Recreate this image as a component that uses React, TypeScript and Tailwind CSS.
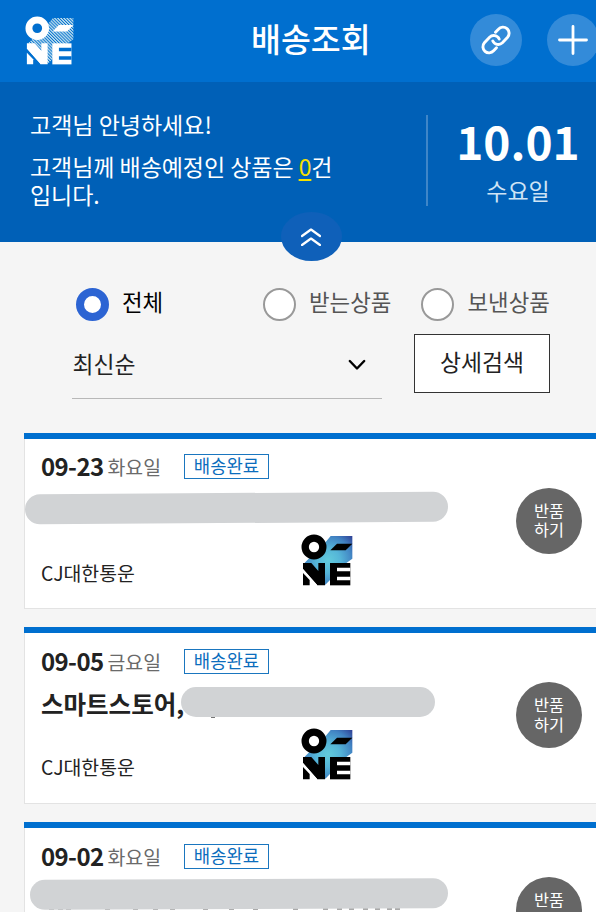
import * as React from "react";
import { useId, useState } from "react";

const filters = ["전체", "받는상품", "보낸상품"];

const deliveries = [
  {
    date: "09-23",
    day: "화요일",
    title: "",
    mask: "left-0 top-[60px] w-[423px] rotate-[-0.4deg]",
    specks: [],
  },
  {
    date: "09-05",
    day: "금요일",
    title: "스마트스토어,",
    mask: "left-[156px] top-[60px] w-[254px]",
    specks: [186],
  },
  {
    date: "09-02",
    day: "화요일",
    title: "",
    mask: "left-[5px] top-[56.5px] w-[418px] rotate-[-0.25deg]",
    specks: [24, 33, 41, 80, 108, 128, 145, 178, 204, 228, 268, 298, 312, 324, 338, 350, 362, 370],
  },
];

function OneLogo({ mono = false, className }: { mono?: boolean; className: string }) {
  const id = useId();
  const ink = mono ? "#fff" : "#000";
  return (
    <svg viewBox="0 0 154 156" className={className} aria-label="ONE">
      <defs>
        <radialGradient id={id + "g"} gradientUnits="userSpaceOnUse" cx="80" cy="80" r="105">
          <stop offset="0" stopColor="#62cbdc" />
          <stop offset="0.35" stopColor="#55b5d8" />
          <stop offset="0.7" stopColor="#4183c3" />
          <stop offset="1" stopColor="#2e3c92" />
        </radialGradient>
        <pattern id={id + "h"} width="7" height="7" patternUnits="userSpaceOnUse" patternTransform="rotate(45)">
          <rect width="7" height="4" fill="#c4e2ee" />
        </pattern>
      </defs>
      <path
        d="M88 6H153V74L134 88L86 138L72 152L10 86L22 74L60 40Z"
        fill={mono ? `url(#${id}h)` : `url(#${id}g)`}
      />
      <circle cx="38" cy="39" r="26.5" fill={mono ? "#006fcf" : "#fff"} stroke={ink} strokeWidth="22" />
      <path d="M87 49L107 29H153L133 49Z" fill={ink} />
      {/* lower row */}
      <path d="M5 87H30L51 111V87H71V154H48L5 105Z" fill={ink} />
      <path d="M5 105L48 154H25V140L5 117Z" fill={mono ? "#006fcf" : "#fff"} />
      <path d="M5 117L25 138V154H5Z" fill={ink} />
      <path d="M86 87H147V154H86Z" fill={ink} />
      <path d="M107 101H147V112H107ZM107 128H147V139H107Z" fill={mono ? "#006fcf" : "#fff"} />
    </svg>
  );
}

function LinkIcon() {
  return (
    <svg viewBox="0 0 32 32" className="size-8" fill="none" stroke="#fff" strokeWidth="2.9" strokeLinecap="round">
      <path d="M15.5 8.2L18.4 5.2A6 6 0 0 1 27.6 13.2L22.4 18.8A6 6 0 0 1 12.8 17" />
      <path d="M16.5 23.8L13.6 26.8A6 6 0 0 1 4.4 18.8L9.6 13.2A6 6 0 0 1 19.2 15" />
    </svg>
  );
}

function Header() {
  return (
    <header className="flex h-[82.3px] bg-[#006fcf]">
      <div className="w-[200px] pt-[15.5px] pl-[25px]">
        <OneLogo mono className="h-[49px] w-[49px]" />
      </div>
      <h1 className="flex-1 pt-[14px] pl-[51px] text-[32.5px] leading-[48px] font-medium whitespace-nowrap text-white">
        배송조회
      </h1>
      <div className="flex w-[126px] shrink-0 gap-[25px] pt-[14px]">
        <button className="flex size-[52px] shrink-0 items-center justify-center rounded-full bg-[#338bd9]">
          <LinkIcon />
        </button>
        <button className="flex size-[52px] shrink-0 items-center justify-center rounded-full bg-[#338bd9]">
          <svg viewBox="0 0 30 30" className="size-[30px]" stroke="#fff" strokeWidth="2.8" strokeLinecap="round">
            <path d="M15 1.5V28.5M1.5 15H28.5" />
          </svg>
        </button>
      </div>
    </header>
  );
}

function Greeting() {
  return (
    <section className="relative flex h-[160px] bg-[#0060b7] text-white">
      <div className="w-[426px] pt-[28.2px] pl-[30px] text-[23px] leading-[28px]">
        <p>고객님 안녕하세요!</p>
        <p className="mt-[13.5px] tracking-[-0.05px]">
          고객님께 배송예정인 상품은{" "}
          <span className="text-[#f5e100] underline decoration-2 underline-offset-[3px]">0</span>건
          <br />
          입니다.
        </p>
      </div>
      <div className="mt-[33px] h-[91px] w-[1.5px] bg-[#3f86c8]" />
      <div className="ml-[16px] flex w-[149px] flex-col items-center">
        <p className="mt-[31px] text-[46px] leading-[54px] font-bold">10.01</p>
        <p className="mt-[9px] text-[23px] leading-[28px] text-[#cfe4f5]">수요일</p>
      </div>
      <button className="absolute top-[130px] left-[281px] flex h-[49px] w-[61px] items-center justify-center rounded-[50%] bg-[#0f60b9]">
        <svg viewBox="0 0 20 18" className="mr-[1px] h-[18px] w-[20px]" fill="none" stroke="#fff" strokeWidth="2.2" strokeLinecap="round" strokeLinejoin="round">
          <path d="M1 8L10 1.5L19 8M1 17L10 10.5L19 17" />
        </svg>
      </button>
    </section>
  );
}

function Filters() {
  const [selected, setSelected] = useState(0);

  return (
    <section className="h-[190.4px] pt-[42px]">
      <div className="flex h-[40px] items-center pl-[75.5px] text-[22.4px] text-[#555]">
        {filters.map((name, i) => (
          <label
            key={name}
            className={
              i === 0 ? "flex w-[187px] items-center" : i === 1 ? "flex w-[158.5px] items-center" : "flex items-center"
            }
          >
            <input type="radio" name="filter" className="sr-only" checked={selected === i} onChange={() => setSelected(i)} />
            <span
              className={
                selected === i
                  ? "size-[33px] shrink-0 rounded-full border-8 border-[#2c64d3] bg-white"
                  : "size-[33px] shrink-0 rounded-full border-2 border-[#999] bg-white"
              }
            />
            <span className={selected === i ? "-mt-[5px] ml-[13.5px] text-black" : "-mt-[5px] ml-[13.5px]"}>{name}</span>
          </label>
        ))}
      </div>
      <div className="mt-[9.5px] flex pl-[72px] text-[22.8px] text-[#222]">
        <div className="flex h-[65px] w-[310px] justify-between border-b border-[#b8b8b8] pr-[16px] leading-[60px]">
          <span className="pl-[0.5px]">최신순</span>
          <svg viewBox="0 0 18 12" className="mt-[25px] h-[12px] w-[18px]" fill="none" stroke="#000" strokeWidth="2.4" strokeLinecap="round" strokeLinejoin="round">
            <path d="M1.8 2L9 9.5L16.2 2" />
          </svg>
        </div>
        <button className="ml-[32px] h-[59px] w-[136px] border border-[#333] bg-white pb-[3px]">상세검색</button>
      </div>
    </section>
  );
}

function DeliveryCard({ item }: { item: (typeof deliveries)[number] }) {
  return (
    <article className="relative h-[176.7px] border-b border-l border-[#e3e3e3] bg-white pl-[16px]">
      <div className="-mr-px -ml-[17px] h-[6px] bg-[#006fcf]" />
      <div className="flex h-[56px] items-center">
        <span className="w-[66.5px] pb-[1px] text-[24px] font-bold tracking-[-0.6px] text-[#222]">{item.date}</span>
        <span className="w-[76.5px] text-[19.4px] text-[#6a6a6a]">{item.day}</span>
        <span className="flex h-[25px] w-[85px] items-center justify-center border border-[#1a76bf] pb-[2px] text-[17.8px] text-[#0b6dbd]">
          배송완료
        </span>
      </div>
      <p className="h-[50px] text-[24.5px] leading-[29px] font-bold text-[#222]">{item.title}</p>
      <p className="mt-[12px] text-[19.4px] leading-[32px] text-[#222]">CJ대한통운</p>

      {/* bottoms of the letters that stick out under the mask */}
      {item.specks.map((x) => (
        <span
          key={x}
          className={
            item.title ? "absolute top-[89px] h-[2px] w-[4px] bg-[#777]" : "absolute top-[86px] h-[1.5px] w-[5px] bg-[#aaa]"
          }
          style={{ left: x }}
        />
      ))}
      <span className={"absolute h-[30px] rounded-full bg-[#d1d3d5] " + item.mask} aria-hidden />
      <OneLogo className="absolute top-[101px] left-[276px] h-[52px] w-[52px]" />
      <button className="absolute top-[55px] left-[491px] flex size-[66px] flex-col items-center justify-center rounded-full bg-[#666] pb-[1px] text-[16.3px] leading-[19.5px] text-white">
        <span>반품</span>
        <span>하기</span>
      </button>
    </article>
  );
}

export default function App() {
  return (
    <div className="h-[912px] w-[596px] overflow-hidden bg-[#f5f5f5] font-['Noto_Sans_CJK_KR',sans-serif]">
      <Header />
      <Greeting />
      <Filters />
      <main className="flex flex-col gap-[18px] pl-[24px]">
        {deliveries.map((item) => (
          <DeliveryCard key={item.date} item={item} />
        ))}
      </main>
    </div>
  );
}
